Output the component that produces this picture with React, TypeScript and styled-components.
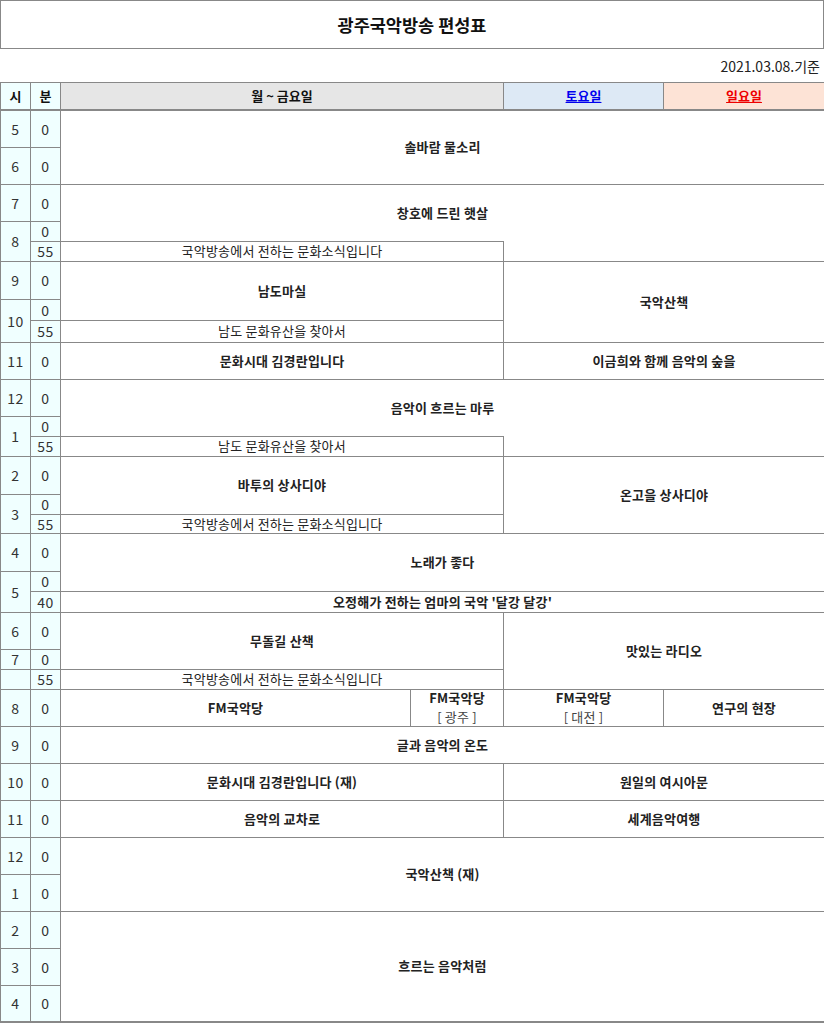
import React from "react";
import styled, { createGlobalStyle } from "styled-components";

const GlobalStyle = createGlobalStyle`
  body {
    margin: 0;
    background: #fff;
    font-family: "Noto Sans CJK KR", "Noto Sans", sans-serif;
    color: #222;
  }
`;

const Page = styled.div`
  width: 824px;
`;

const TitleBox = styled.div`
  height: 47px;
  border: 1px solid #888;
  display: flex;
  align-items: center;
  justify-content: center;
  font-size: 17.5px;
  font-weight: bold;
  color: #111;
`;

const DateLine = styled.div`
  height: 32px;
  display: flex;
  align-items: center;
  justify-content: flex-end;
  padding: 1px 4px 0 0;
  font-size: 14px;
  color: #222;
`;

const Table = styled.table`
  width: 824px;
  border-collapse: collapse;
  table-layout: fixed;
  border-bottom: 2px solid #888;
`;

const Row = styled.tr<{ $h?: number }>`
  height: ${(p) => p.$h ?? 37}px;
`;

const HeadCell = styled.th<{ $tone?: "time" | "week" | "sat" | "sun" }>`
  height: 26px;
  padding: 0;
  border: 1px solid #888;
  border-bottom: 2px solid #888;
  font-size: 13px;
  line-height: 16px;
  font-weight: bold;
  background: ${(p) =>
    p.$tone === "time"
      ? "#f0ffff"
      : p.$tone === "sat"
      ? "#dde9f5"
      : p.$tone === "sun"
      ? "#fde3d6"
      : "#e6e6e6"};
  color: ${(p) => (p.$tone === "sat" ? "#0000ee" : p.$tone === "sun" ? "#ee0000" : "#111")};
  text-decoration: ${(p) => (p.$tone === "sat" || p.$tone === "sun" ? "underline" : "none")};
`;

const TimeCell = styled.td`
  padding: 0;
  border: 1px solid #888;
  background: #f0ffff;
  text-align: center;
  font-size: 14px;
  line-height: 16px;
  letter-spacing: 0.5px;
  color: #333;
`;

const Program = styled.td<{ $light?: boolean; $open?: boolean }>`
  padding: 0;
  border: 1px solid #888;
  ${(p) => (p.$open ? "border-top-style: hidden;" : "")}
  text-align: center;
  font-size: 13px;
  line-height: 16px;
  letter-spacing: 0.2px;
  font-weight: ${(p) => (p.$light ? "normal" : "bold")};
  color: #222;
`;

const Note = styled.span`
  display: block;
  margin-top: 3px;
  font-weight: normal;
  color: #444;
`;

export default function App() {
  return (
    <Page>
      <GlobalStyle />
      <TitleBox>광주국악방송 편성표</TitleBox>
      <DateLine>2021.03.08.기준</DateLine>
      <Table>
        <colgroup>
          <col style={{ width: 30 }} />
          <col style={{ width: 30 }} />
          <col style={{ width: 350 }} />
          <col style={{ width: 93 }} />
          <col style={{ width: 160 }} />
          <col style={{ width: 161 }} />
        </colgroup>
        <thead>
          <tr>
            <HeadCell $tone="time">시</HeadCell>
            <HeadCell $tone="time">분</HeadCell>
            <HeadCell $tone="week" colSpan={2}>월 ~ 금요일</HeadCell>
            <HeadCell $tone="sat">토요일</HeadCell>
            <HeadCell $tone="sun">일요일</HeadCell>
          </tr>
        </thead>
        <tbody>
          <Row>
            <TimeCell>5</TimeCell>
            <TimeCell>0</TimeCell>
            <Program colSpan={4} rowSpan={2}>솔바람 물소리</Program>
          </Row>
          <Row>
            <TimeCell>6</TimeCell>
            <TimeCell>0</TimeCell>
          </Row>
          <Row>
            <TimeCell>7</TimeCell>
            <TimeCell>0</TimeCell>
            <Program colSpan={4} rowSpan={2}>창호에 드린 햇살</Program>
          </Row>
          <Row $h={20}>
            <TimeCell rowSpan={2}>8</TimeCell>
            <TimeCell>0</TimeCell>
          </Row>
          <Row $h={20}>
            <TimeCell>55</TimeCell>
            <Program colSpan={2} $light>국악방송에서 전하는 문화소식입니다</Program>
            <Program colSpan={2} $open />
          </Row>
          <Row $h={38}>
            <TimeCell>9</TimeCell>
            <TimeCell>0</TimeCell>
            <Program colSpan={2} rowSpan={2}>남도마실</Program>
            <Program colSpan={2} rowSpan={3}>국악산책</Program>
          </Row>
          <Row $h={21}>
            <TimeCell rowSpan={2}>10</TimeCell>
            <TimeCell>0</TimeCell>
          </Row>
          <Row $h={22}>
            <TimeCell>55</TimeCell>
            <Program colSpan={2} $light>남도 문화유산을 찾아서</Program>
          </Row>
          <Row>
            <TimeCell>11</TimeCell>
            <TimeCell>0</TimeCell>
            <Program colSpan={2}>문화시대 김경란입니다</Program>
            <Program colSpan={2}>이금희와 함께 음악의 숲을</Program>
          </Row>
          <Row>
            <TimeCell>12</TimeCell>
            <TimeCell>0</TimeCell>
            <Program colSpan={4} rowSpan={2}>음악이 흐르는 마루</Program>
          </Row>
          <Row $h={20}>
            <TimeCell rowSpan={2}>1</TimeCell>
            <TimeCell>0</TimeCell>
          </Row>
          <Row $h={20}>
            <TimeCell>55</TimeCell>
            <Program colSpan={2} $light>남도 문화유산을 찾아서</Program>
            <Program colSpan={2} $open />
          </Row>
          <Row $h={38}>
            <TimeCell>2</TimeCell>
            <TimeCell>0</TimeCell>
            <Program colSpan={2} rowSpan={2}>바투의 상사디야</Program>
            <Program colSpan={2} rowSpan={3}>온고을 상사디야</Program>
          </Row>
          <Row $h={20}>
            <TimeCell rowSpan={2}>3</TimeCell>
            <TimeCell>0</TimeCell>
          </Row>
          <Row $h={19}>
            <TimeCell>55</TimeCell>
            <Program colSpan={2} $light>국악방송에서 전하는 문화소식입니다</Program>
          </Row>
          <Row $h={38}>
            <TimeCell>4</TimeCell>
            <TimeCell>0</TimeCell>
            <Program colSpan={4} rowSpan={2}>노래가 좋다</Program>
          </Row>
          <Row $h={20}>
            <TimeCell rowSpan={2}>5</TimeCell>
            <TimeCell>0</TimeCell>
          </Row>
          <Row $h={21}>
            <TimeCell>40</TimeCell>
            <Program colSpan={4}>오정해가 전하는 엄마의 국악 '달강 달강'</Program>
          </Row>
          <Row>
            <TimeCell>6</TimeCell>
            <TimeCell>0</TimeCell>
            <Program colSpan={2} rowSpan={2}>무돌길 산책</Program>
            <Program colSpan={2} rowSpan={3}>맛있는 라디오</Program>
          </Row>
          <Row $h={20}>
            <TimeCell>7</TimeCell>
            <TimeCell>0</TimeCell>
          </Row>
          <Row $h={20}>
            <TimeCell />
            <TimeCell>55</TimeCell>
            <Program colSpan={2} $light>국악방송에서 전하는 문화소식입니다</Program>
          </Row>
          <Row>
            <TimeCell>8</TimeCell>
            <TimeCell>0</TimeCell>
            <Program>FM국악당</Program>
            <Program>
              FM국악당<Note>[ 광주 ]</Note>
            </Program>
            <Program>
              FM국악당<Note>[ 대전 ]</Note>
            </Program>
            <Program>연구의 현장</Program>
          </Row>
          <Row>
            <TimeCell>9</TimeCell>
            <TimeCell>0</TimeCell>
            <Program colSpan={4}>글과 음악의 온도</Program>
          </Row>
          <Row>
            <TimeCell>10</TimeCell>
            <TimeCell>0</TimeCell>
            <Program colSpan={2}>문화시대 김경란입니다 (재)</Program>
            <Program colSpan={2}>원일의 여시아문</Program>
          </Row>
          <Row>
            <TimeCell>11</TimeCell>
            <TimeCell>0</TimeCell>
            <Program colSpan={2}>음악의 교차로</Program>
            <Program colSpan={2}>세계음악여행</Program>
          </Row>
          <Row>
            <TimeCell>12</TimeCell>
            <TimeCell>0</TimeCell>
            <Program colSpan={4} rowSpan={2}>국악산책 (재)</Program>
          </Row>
          <Row>
            <TimeCell>1</TimeCell>
            <TimeCell>0</TimeCell>
          </Row>
          <Row>
            <TimeCell>2</TimeCell>
            <TimeCell>0</TimeCell>
            <Program colSpan={4} rowSpan={3}>흐르는 음악처럼</Program>
          </Row>
          <Row>
            <TimeCell>3</TimeCell>
            <TimeCell>0</TimeCell>
          </Row>
          <Row>
            <TimeCell>4</TimeCell>
            <TimeCell>0</TimeCell>
          </Row>
        </tbody>
      </Table>
    </Page>
  );
}
